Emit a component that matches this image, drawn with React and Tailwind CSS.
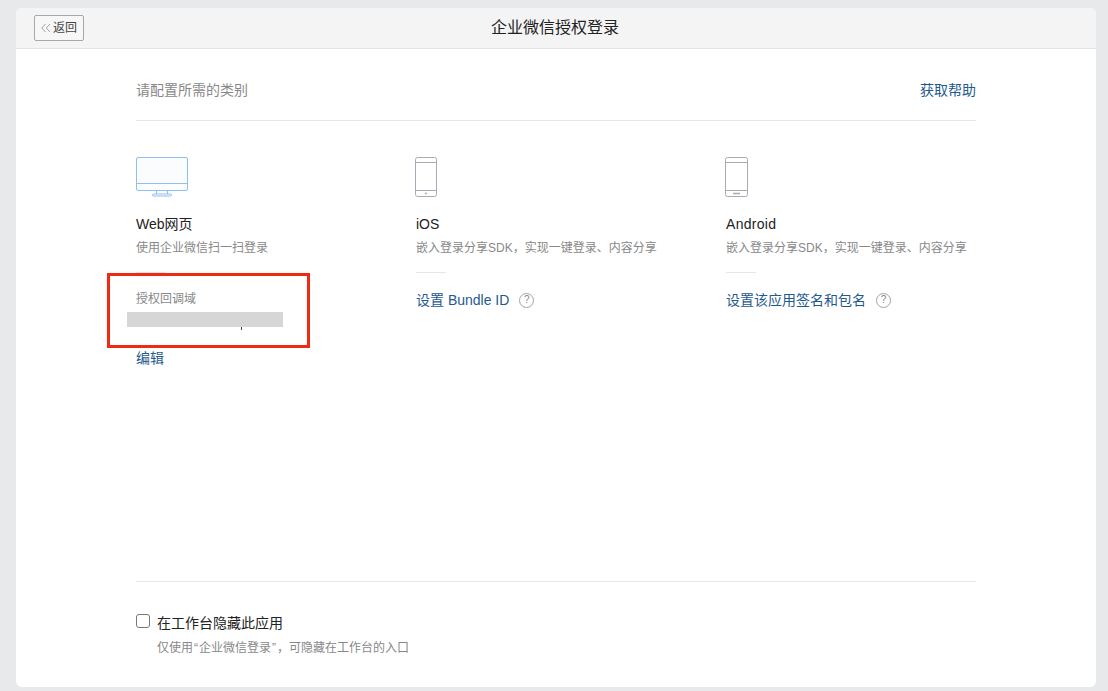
const FONT = "font-['Liberation_Sans','Noto_Sans_CJK_SC',sans-serif]";

function Help() {
  return (
    <span className="ml-[10px] flex h-[15px] w-[15px] items-center justify-center rounded-full border border-[#a3a3a3] text-[10px] leading-none text-[#888]">?</span>
  );
}

function Desktop() {
  return (
    <svg width="52" height="40" viewBox="0 0 52 40" fill="none" stroke="#8dc0f2" strokeWidth="1">
      <rect x="0.5" y="0.5" width="51" height="33" rx="1.5" fill="#fbfcfe" />
      <path d="M0.5 26.5H51.5" />
      <path d="M20.5 34V37M31.5 34V37" />
      <rect x="16.5" y="37" width="19" height="2" rx="1" />
    </svg>
  );
}

function Phone({ android }) {
  return (
    <svg width={android ? 23 : 22} height="40" viewBox={android ? "0 0 23 40" : "0 0 22 40"} fill="none" stroke="#a6abb5" strokeWidth="1" className="-ml-px">
      <rect x="0.5" y="0.5" width={android ? 22 : 21} height="39" rx="2" />
      <path d={android ? "M0.5 5.5H22.5M0.5 33.5H22.5" : "M0.5 5.5H21.5M0.5 33.5H21.5"} />
      {android ? <path d="M8 36.5H15" strokeWidth="1.5" /> : <circle cx="11" cy="36.5" r="0.7" />}
    </svg>
  );
}

function Column({ width, icon, title, titleClass = "", desc, children }) {
  return (
    <div className={`${width} shrink-0`}>
      <div className="flex h-[40px] items-start">{icon}</div>
      <div className={`mt-[17px] text-[14px] leading-[20px] text-[#222] ${titleClass}`}>{title}</div>
      <div className="mt-[4px] text-[12px] leading-[20px] text-[#888]">{desc}</div>
      <div className="mt-[14px] h-px w-[30px] bg-[#e4e6e9]" />
      {children}
    </div>
  );
}

export default function App() {
  return (
    <div className={`${FONT} h-[691px] w-[1108px] overflow-hidden bg-[#e8e9eb] px-[12px] pt-[8px]`}>
      <div className="relative mx-[4px] flex h-[679px] w-[1080px] flex-col overflow-hidden rounded-[6px] bg-white">
        <div className="relative flex h-[41px] shrink-0 items-center justify-center border-b border-[#e0e4e8] bg-[#f4f4f4] pr-[2px]">
          <button className="absolute left-[18px] top-[7px] flex h-[26px] w-[50px] items-center justify-center rounded-[2px] border border-[#a8a8a8] bg-[#f7f7f7] text-[12px] text-[#444]">
            <svg width="10" height="10" viewBox="0 0 10 10" fill="none" stroke="#888" strokeWidth="0.8" className="mr-[2px]">
              <path d="M4.5 1L0.8 5L4.5 9M9 1L5.3 5L9 9" />
            </svg>
            返回
          </button>
          <div className="text-[16px] leading-[22px] text-[#222]">企业微信授权登录</div>
        </div>

        <div className="flex flex-1 flex-col px-[120px]">
          <div className="flex h-[72px] shrink-0 items-center justify-between border-b border-[#e4e6e9] pt-[11px]">
            <span className="text-[14px] text-[#888]">请配置所需的类别</span>
            <a className="text-[14px] text-[#1f5a8e]">获取帮助</a>
          </div>

          <div className="flex h-[461px] shrink-0 border-b border-[#e4e6e9] pt-[36px]">
            <Column width="w-[280px]" icon={<Desktop />} title="Web网页" desc="使用企业微信扫一扫登录">
              <div className="mt-[16px] text-[12px] leading-[20px] text-[#888]">授权回调域</div>
              <div className="h-[26px]" />
              <a className="mt-[13px] block text-[14px] leading-[20px] text-[#1f5a8e]">编辑</a>
            </Column>
            <Column width="w-[310px]" icon={<Phone />} title="iOS" desc="嵌入登录分享SDK，实现一键登录、内容分享">
              <div className="mt-[17px] flex h-[20px] items-center text-[14px] text-[#1f5a8e]">
                设置 Bundle ID
                <Help />
              </div>
            </Column>
            <Column width="w-[250px]" icon={<Phone android />} title="Android" titleClass="tracking-[0.3px]" desc="嵌入登录分享SDK，实现一键登录、内容分享">
              <div className="mt-[17px] flex h-[20px] items-center text-[14px] text-[#1f5a8e]">
                设置该应用签名和包名
                <Help />
              </div>
            </Column>
          </div>

          <div className="flex pt-[31px]">
            <input type="checkbox" className="mt-[1px] h-[14px] w-[14px] appearance-none rounded-[3px] border border-[#777] bg-white" />
            <div className="ml-[7px]">
              <div className="text-[14px] leading-[20px] text-[#222]">在工作台隐藏此应用</div>
              <div className="mt-[5px] text-[12px] leading-[20px] text-[#888]">
                仅使用<span className="mx-px">“</span>企业微信登录<span className="mx-px">”</span>，可隐藏在工作台的入口
              </div>
            </div>
          </div>
        </div>

        <div className="absolute left-[111px] top-[304px] h-[15px] w-[156px] bg-[#d6d6d6]" />
        <div className="absolute left-[225px] top-[319px] h-[3px] w-px bg-[#444]" />
        <div className="absolute left-[91px] top-[265px] h-[75px] w-[203px] border-[3px] border-[#f02a12]" />
      </div>
    </div>
  );
}
